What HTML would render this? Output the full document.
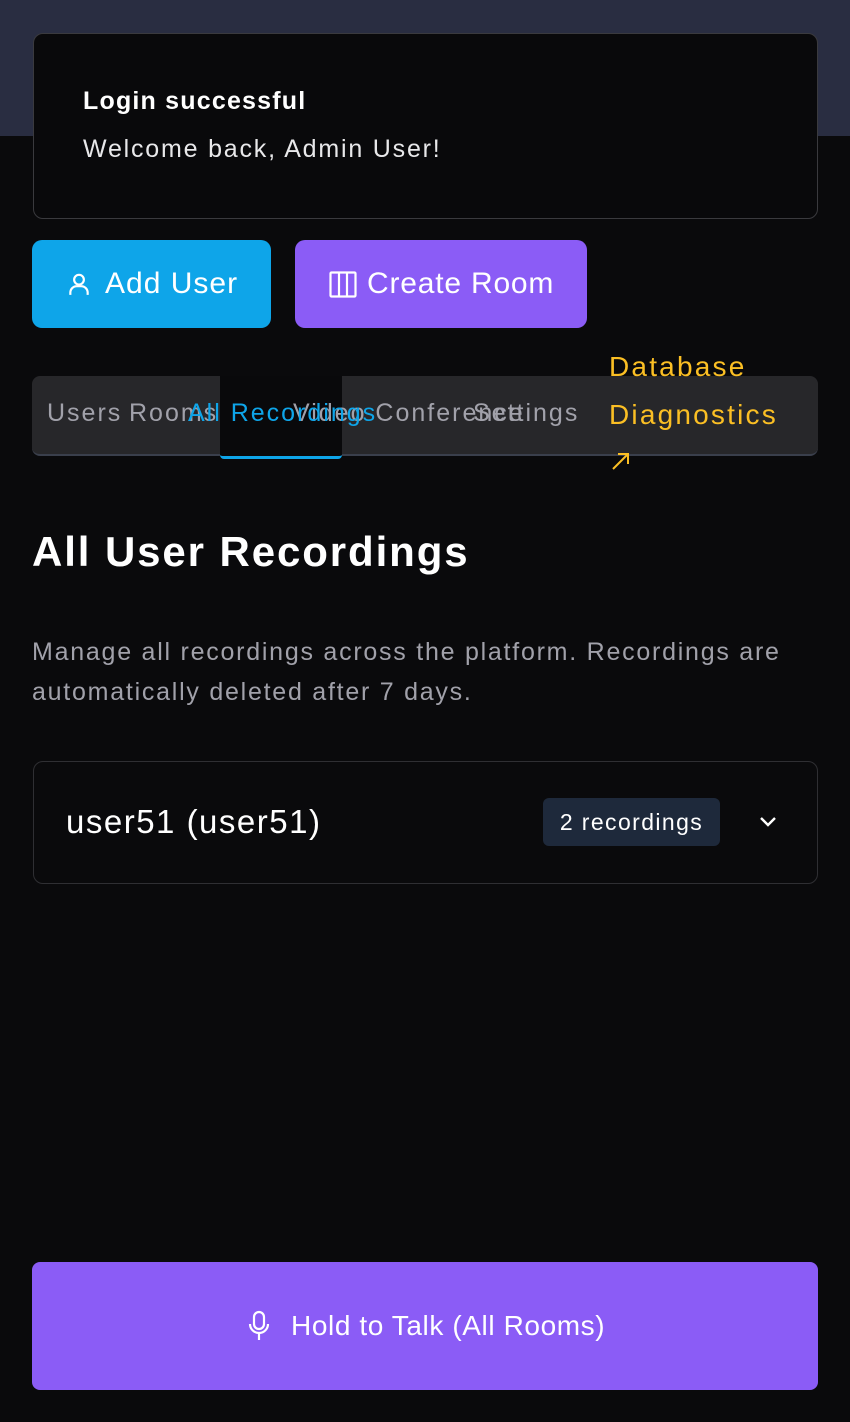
<!DOCTYPE html>
<html><head><style>
body{margin:0;width:850px;height:1422px;background:#0a0a0c;font-family:"Liberation Sans",sans-serif;position:relative;overflow:hidden;color:#fff}
.a{position:absolute;white-space:nowrap}
.t{font-size:25px;letter-spacing:2px}
</style></head><body>
<div class="a" style="left:0;top:0;width:850px;height:136px;background:#292d41"></div>
<div class="a" style="left:33px;top:33px;width:783px;height:184px;background:#09090b;border:1px solid #3a3a3e;border-radius:10px"></div>
<div class="a" style="left:83px;top:87px;font-size:25px;font-weight:bold;letter-spacing:1.2px">Login successful</div>
<div class="a" style="left:83px;top:135px;font-size:25px;color:#e8e8ea;letter-spacing:1.8px">Welcome back, Admin User!</div>

<div class="a" style="left:32px;top:240px;width:239px;height:88px;background:#0ea5e9;border-radius:10px"></div>
<svg class="a" style="left:66px;top:270px" width="26" height="28" viewBox="0 0 24 24" fill="none" stroke="#fff" stroke-width="2"><circle cx="12" cy="8" r="4.5"/><path d="M4 22v-2a6 6 0 0 1 6-6h4a6 6 0 0 1 6 6v2"/></svg>
<div class="a" style="left:105px;top:267px;font-size:30px;letter-spacing:1px">Add User</div>
<div class="a" style="left:295px;top:240px;width:292px;height:88px;background:#8b5cf6;border-radius:10px"></div>
<svg class="a" style="left:329px;top:271px" width="28" height="27" viewBox="0 0 28 27" fill="none" stroke="#fff" stroke-width="2.2"><rect x="1.5" y="1.5" width="25" height="24" rx="1"/><path d="M10 1.5v24M18 1.5v24"/></svg>
<div class="a" style="left:367px;top:267px;font-size:30px;letter-spacing:0.8px">Create Room</div>

<div class="a" style="left:32px;top:376px;width:786px;height:78px;background:#27272a;border-radius:8px;border-bottom:2px solid #3a3f4c"></div>
<div class="a" style="left:220px;top:376px;width:122px;height:80px;background:#09090b;border-bottom:3px solid #0ea5e9;border-radius:0 0 4px 4px"></div>
<div class="a t" style="left:47px;top:399px;color:#a1a1aa">Users</div>
<div class="a t" style="left:129px;top:399px;color:#a1a1aa">Rooms</div>
<div class="a t" style="left:293px;top:399px;color:#a1a1aa">Video Conference</div>
<div class="a t" style="left:473px;top:399px;color:#a1a1aa">Settings</div>
<div class="a t" style="left:188px;top:399px;color:#0ea5e9">All Recordings</div>
<div class="a" style="left:609px;top:343px;font-size:28px;color:#fbbf24;line-height:48px;letter-spacing:2.2px">Database<br>Diagnostics</div>
<svg class="a" style="left:610px;top:450px" width="22" height="22" viewBox="0 0 22 22" fill="none" stroke="#fbbf24" stroke-width="2"><path d="M3 19L18 4M8 4h10v10"/></svg>

<div class="a" style="left:32px;top:528px;font-size:42px;font-weight:bold;letter-spacing:1.9px">All User Recordings</div>
<div class="a" style="left:32px;top:632px;font-size:25px;color:#a1a1aa;line-height:40px;letter-spacing:1.75px">Manage all recordings across the platform. Recordings are<br>automatically deleted after 7 days.</div>

<div class="a" style="left:33px;top:761px;width:783px;height:121px;border:1px solid #2f2f33;border-radius:10px"></div>
<div class="a" style="left:66px;top:803px;font-size:33px;letter-spacing:1.5px">user51 (user51)</div>
<div class="a" style="left:543px;top:798px;width:177px;height:48px;background:#1e293b;border-radius:6px;font-size:23px;line-height:48px;text-align:center;letter-spacing:1.4px">2 recordings</div>
<svg class="a" style="left:757px;top:812px" width="22" height="20" viewBox="0 0 22 20" fill="none" stroke="#fff" stroke-width="2.4"><path d="M4 6l7 7 7-7"/></svg>

<div class="a" style="left:32px;top:1262px;width:786px;height:128px;background:#8b5cf6;border-radius:8px"></div>
<svg class="a" style="left:247px;top:1310px" width="24" height="32" viewBox="0 0 24 32" fill="none" stroke="#fff" stroke-width="2.2"><rect x="7" y="2" width="10" height="17" rx="5"/><path d="M3 14a9 9 0 0 0 18 0M12 23v7"/></svg>
<div class="a" style="left:291px;top:1310px;font-size:28px;letter-spacing:0.6px">Hold to Talk (All Rooms)</div>
</body></html>
